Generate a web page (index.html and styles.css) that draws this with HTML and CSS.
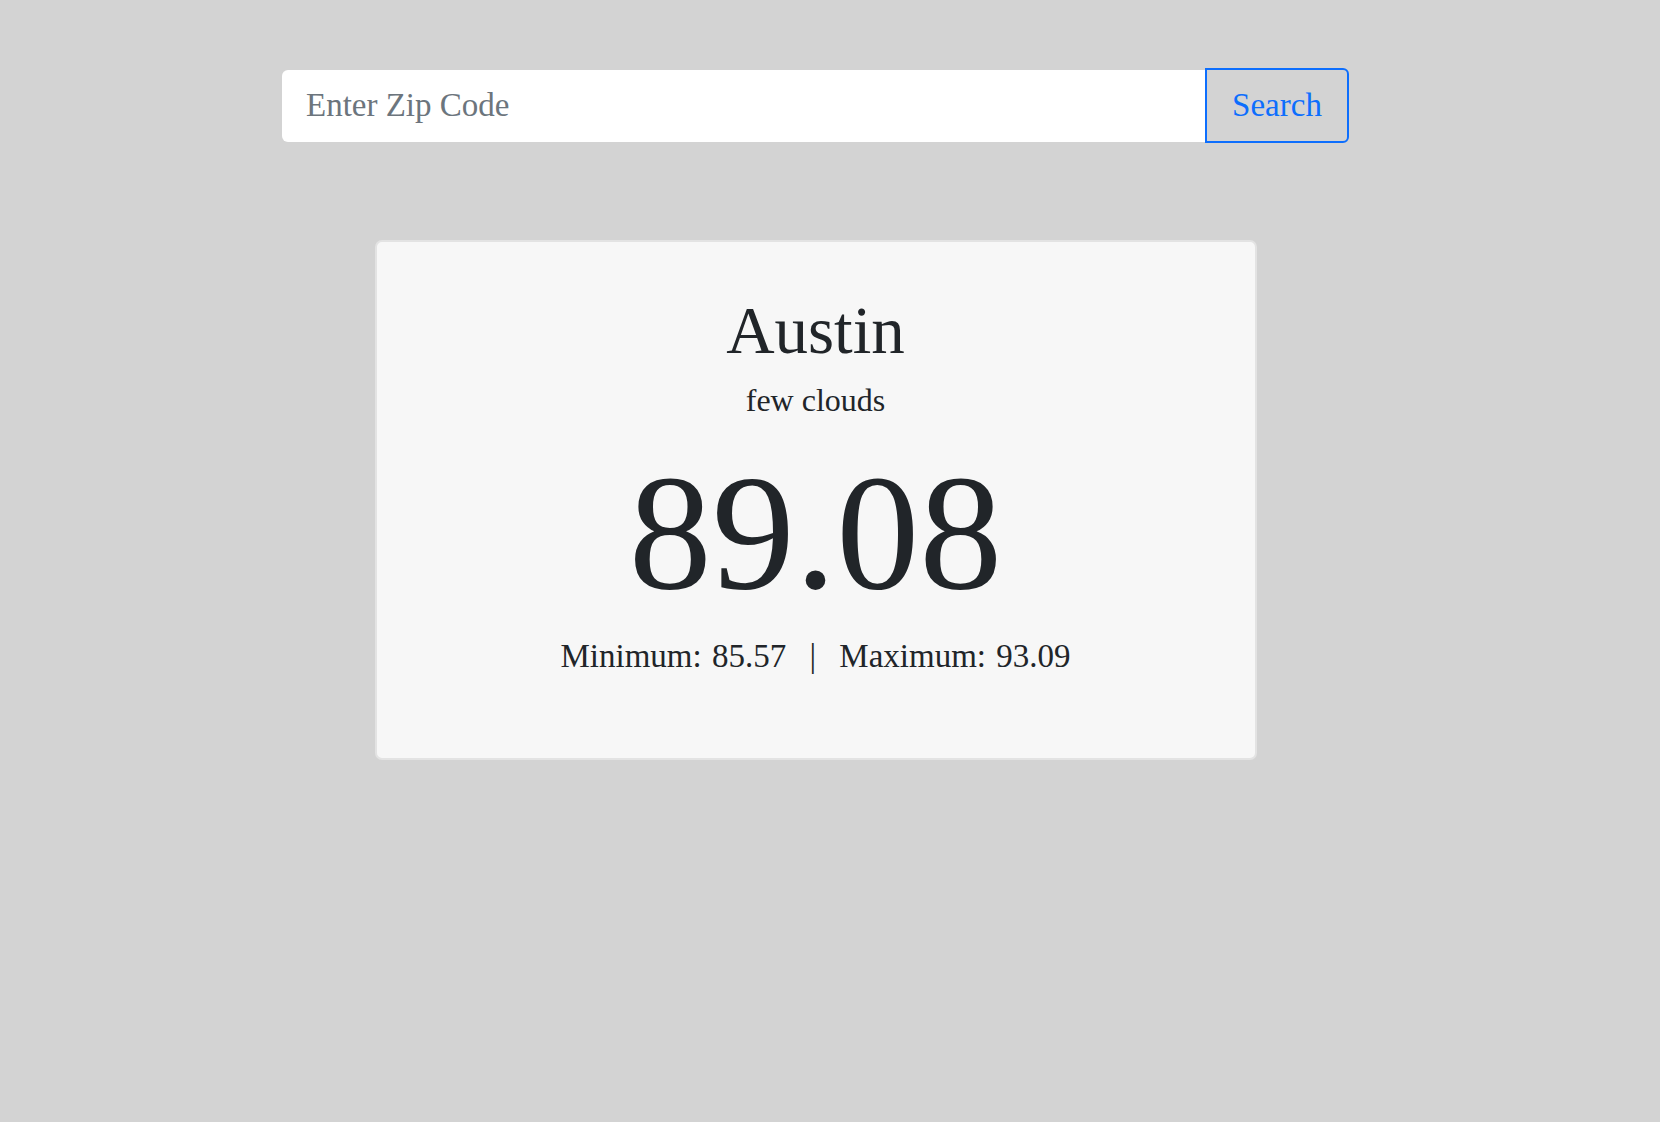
FILE: index.html
```html
<!DOCTYPE html>
<html>
<head>
<meta charset="utf-8">
<title>Weather</title>
<link rel="stylesheet" href="styles.css">
</head>
<body>
<main class="page">
  <form class="search">
    <input class="search-input" type="text" placeholder="Enter Zip Code">
    <button class="search-btn" type="button">Search</button>
  </form>
  <section class="card">
    <h1 class="city">Austin</h1>
    <p class="desc">few clouds</p>
    <p class="temp">89.08</p>
    <p class="range">Minimum: 85.57 <span class="sep">|</span> Maximum: 93.09</p>
  </section>
</main>
</body>
</html>
```

FILE: styles.css
```css
html, body {
  margin: 0;
  padding: 0;
  background: #d3d3d3;
}
body {
  font-family: "Liberation Serif", "DejaVu Serif", serif;
  color: #212529;
}
.page {
  display: flex;
  flex-direction: column;
  align-items: center;
  padding: 68px 29px 0 0;
}
.search {
  display: flex;
  align-items: center;
  width: 1067px;
  margin: 0;
}
.search-input {
  flex: 1;
  height: 72px;
  box-sizing: border-box;
  border: none;
  border-radius: 6px 0 0 6px;
  background: #fff;
  padding: 0 24px;
  font-family: inherit;
  font-size: 33px;
  color: #212529;
  outline: none;
}
.search-input::placeholder {
  color: #6c757d;
}
.search-btn {
  width: 144px;
  height: 75px;
  box-sizing: border-box;
  border: 2px solid #0d6efd;
  border-radius: 0 6px 6px 0;
  background: transparent;
  color: #0d6efd;
  font-family: inherit;
  font-size: 33px;
  padding: 0;
}
.card {
  margin-top: 97px;
  width: 882px;
  height: 520px;
  box-sizing: border-box;
  background: #f7f7f7;
  border: 2px solid #e3e3e3;
  border-radius: 7px;
  display: flex;
  flex-direction: column;
  align-items: center;
  padding-top: 46px;
}
.city {
  margin: 0;
  font-weight: normal;
  font-size: 67px;
  line-height: 84px;
}
.desc {
  margin: 8px 0 0 0;
  font-size: 32px;
  line-height: 40px;
}
.temp {
  margin: 22px 0 0 0;
  font-size: 166px;
  line-height: 180px;
}
.range {
  margin: 14px 0 0 0;
  font-size: 33px;
  line-height: 40px;
  word-spacing: 2px;
}
.sep {
  margin: 0 13px;
}
```
